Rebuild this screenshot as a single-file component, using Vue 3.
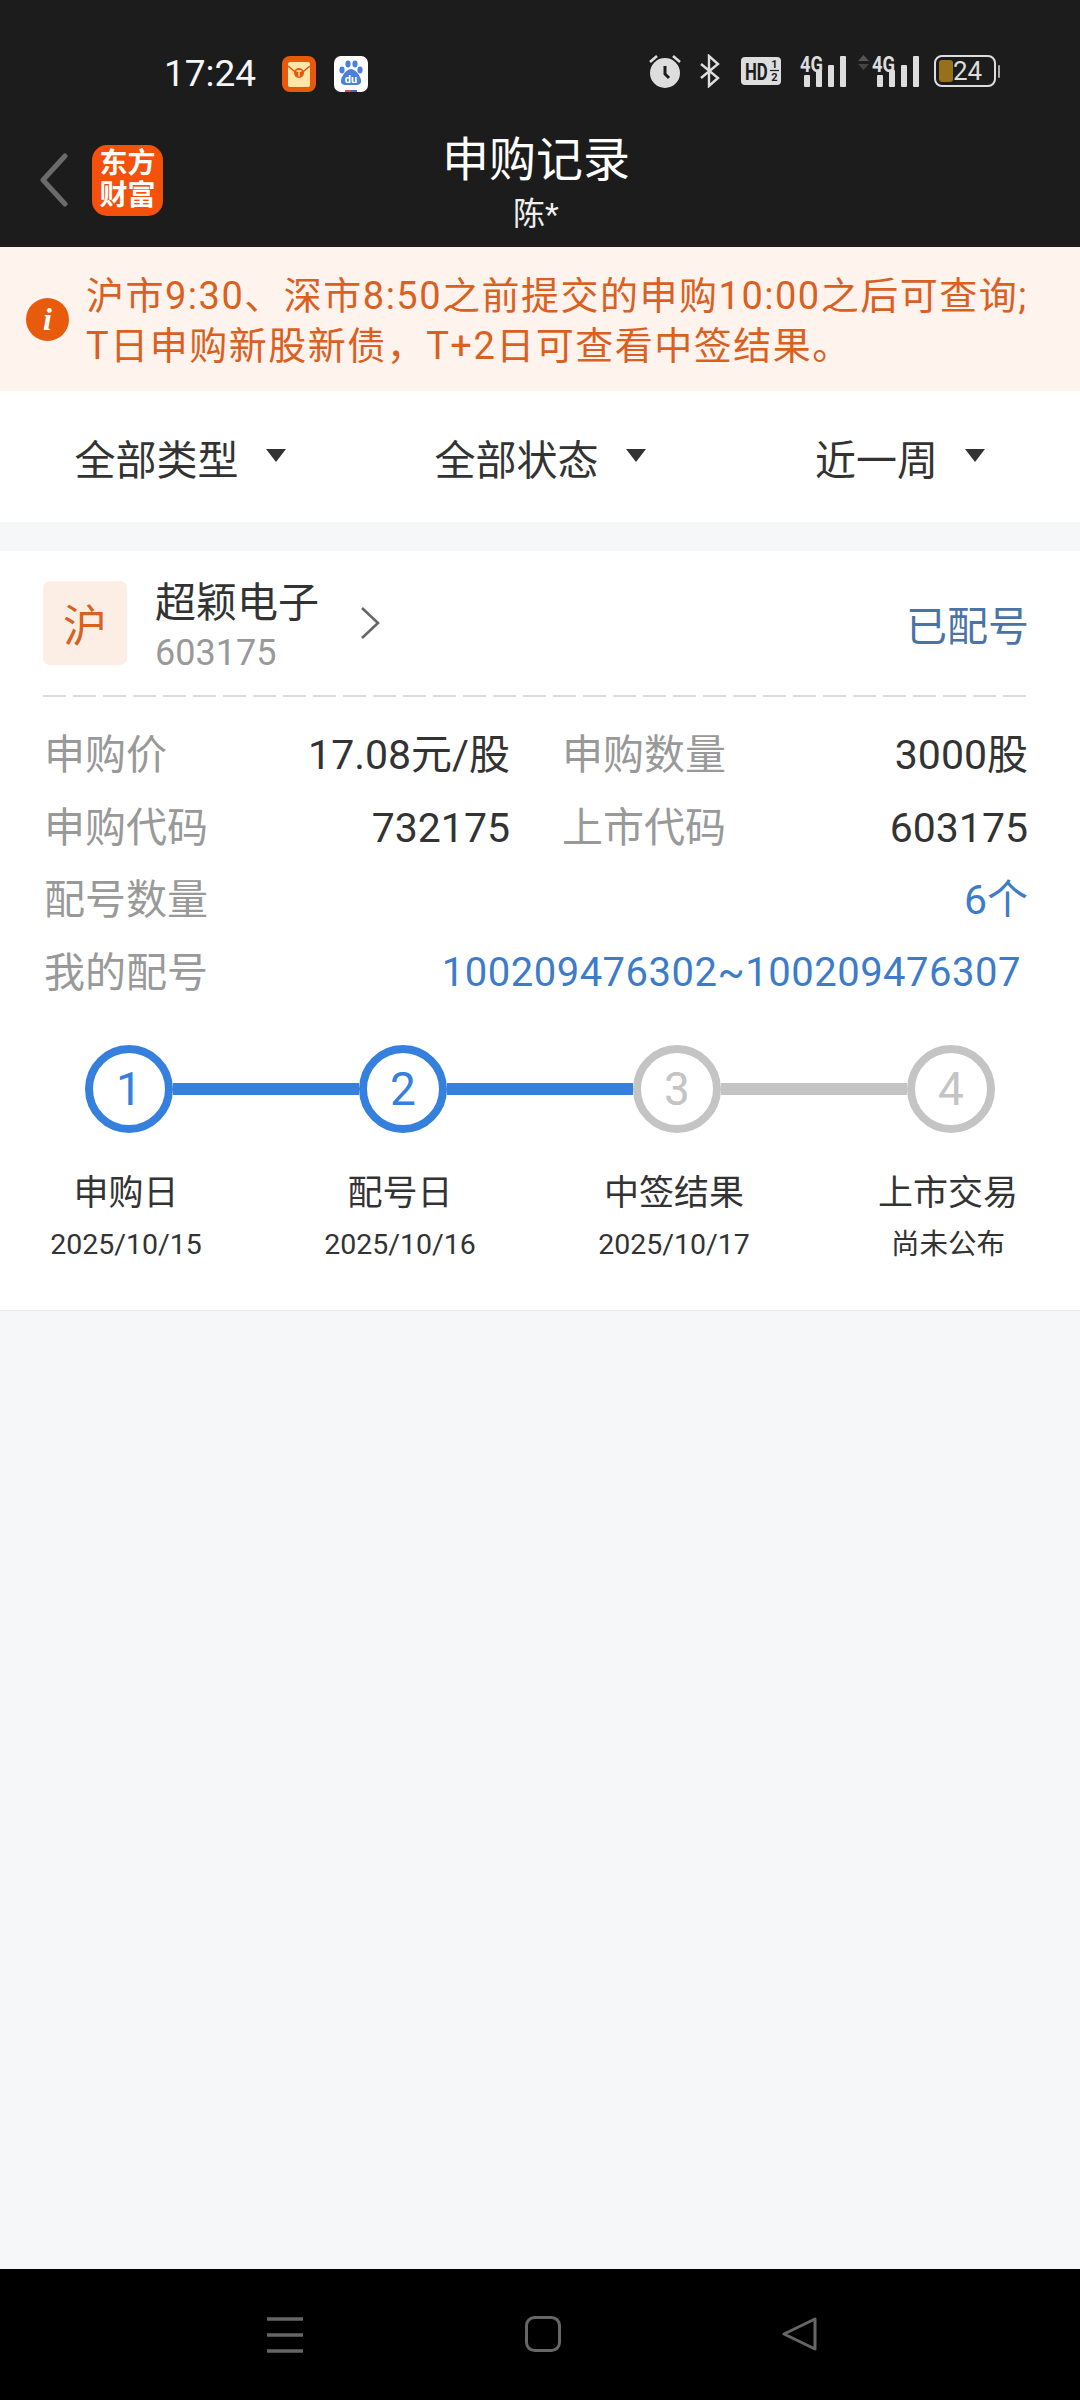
<script setup>
const rows = [
  [{ label: '申购价', value: '17.08元/股' }, { label: '申购数量', value: '3000股' }],
  [{ label: '申购代码', value: '732175' }, { label: '上市代码', value: '603175' }],
]
const steps = [
  { n: 1, name: '申购日', date: '2025/10/15', done: true },
  { n: 2, name: '配号日', date: '2025/10/16', done: true },
  { n: 3, name: '中签结果', date: '2025/10/17', done: false },
  { n: 4, name: '上市交易', date: '尚未公布', done: false },
]
const filters = ['全部类型', '全部状态', '近一周']
</script>

<template>
  <div class="page">
    <header class="header">
      <div class="status">
        <span class="time">17:24</span>
        <svg class="app-icon first" width="34" height="36" viewBox="0 0 34 36">
          <rect width="34" height="36" rx="8" fill="#e8590c" />
          <rect x="6" y="6" width="22" height="25" rx="2" fill="#fde6a8" />
          <path d="M6 10 L17 19 L28 10" fill="none" stroke="#d9530f" stroke-width="1.5" />
          <circle cx="17" cy="17" r="5" fill="#e8590c" />
          <path d="M14.5 15 H19.5 M17 15 V20.5" stroke="#fde6a8" stroke-width="1.4" />
        </svg>
        <svg class="app-icon" width="34" height="36" viewBox="0 0 34 36">
          <rect width="34" height="36" rx="7" fill="#fff" />
          <ellipse cx="8" cy="14" rx="2.6" ry="3.4" fill="#4a7fe0" />
          <ellipse cx="14" cy="8" rx="2.6" ry="3.4" fill="#4a7fe0" />
          <ellipse cx="21" cy="8" rx="2.6" ry="3.4" fill="#4a7fe0" />
          <ellipse cx="26" cy="14" rx="2.6" ry="3.4" fill="#4a7fe0" />
          <path d="M17 13 C22 13 28 22 27 26 C26 30 21 29 17 29 C13 29 8 30 7 26 C6 22 12 13 17 13 Z" fill="#4a7fe0" />
          <text x="17" y="27" text-anchor="middle" class="du">du</text>
          <rect x="11" y="34" width="6" height="2" fill="#d84a4a" />
          <rect x="17" y="34" width="6" height="2" fill="#4a62c0" />
        </svg>
        <div class="sys">
          <svg width="32" height="34" viewBox="0 0 32 34">
            <circle cx="16" cy="19" r="15" fill="#ddd" />
            <path d="M16 12 V20 L20 24" fill="none" stroke="#1c1c1c" stroke-width="3" />
            <path d="M1 8 L8 2 M31 8 L24 2" stroke="#ddd" stroke-width="2.6" />
          </svg>
          <svg class="ml-19" width="20" height="34" viewBox="0 0 20 34">
            <path d="M1 10 L18 24 L9 32 V2 L18 10 L1 24" fill="none" stroke="#ddd" stroke-width="2.4" />
          </svg>
          <svg class="ml-21" width="40" height="34" viewBox="0 -3 40 34">
            <rect width="40" height="28" rx="4" fill="#ddd" />
            <text transform="translate(4 23) scale(0.7 1)" class="hd">HD</text>
            <text x="33.5" y="11" text-anchor="middle" class="hd-small">1</text>
            <text x="33.5" y="24" text-anchor="middle" class="hd-small">2</text>
            <path d="M29 13.5 H38" stroke="#1c1c1c" stroke-width="1.2" />
          </svg>
          <svg class="ml-19" width="46" height="40" viewBox="0 -3 46 40">
            <text x="0" y="18" class="net" textLength="23" lengthAdjust="spacingAndGlyphs">4G</text>
            <rect x="4" y="21" width="6" height="12" rx="1" fill="#ddd" />
            <rect x="16" y="16" width="6" height="17" rx="1" fill="#ddd" />
            <rect x="28" y="11" width="6" height="22" rx="1" fill="#ddd" />
            <rect x="40" y="2" width="6" height="31" rx="1" fill="#ddd" />
          </svg>
          <svg class="ml-12" width="61" height="40" viewBox="0 -3 61 40">
            <path d="M0 7 L5.5 1 L11 7 Z" fill="#555" />
            <path d="M0 10 L5.5 16 L11 10 Z" fill="#444" />
            <text x="14" y="18" class="net" textLength="23" lengthAdjust="spacingAndGlyphs">4G</text>
            <rect x="19" y="21" width="6" height="12" rx="1" fill="#ddd" />
            <rect x="31" y="16" width="6" height="17" rx="1" fill="#ddd" />
            <rect x="43" y="11" width="6" height="22" rx="1" fill="#ddd" />
            <rect x="55" y="2" width="6" height="31" rx="1" fill="#ddd" />
          </svg>
          <svg class="ml-15" width="66" height="32" viewBox="0 0 66 32">
            <rect x="1" y="1" width="60" height="30" rx="7" fill="none" stroke="#ddd" stroke-width="2" />
            <rect x="5" y="5" width="14" height="22" rx="3" fill="#96701a" />
            <text x="19" y="25" class="batt">24</text>
            <rect x="64" y="10" width="2" height="13" rx="1" fill="#aaa" />
          </svg>
        </div>
      </div>
      <div class="nav">
        <div class="nav-left">
          <svg width="30" height="54" viewBox="0 0 30 54">
            <path d="M26 3 L4 27 L26 51" fill="none" stroke="#6b6b6b" stroke-width="5" stroke-linecap="round" stroke-linejoin="round" />
          </svg>
          <div class="logo"><span>东方</span><span>财富</span></div>
        </div>
        <div class="title">
          <div class="title-main">申购记录</div>
          <div class="title-sub">陈*</div>
        </div>
      </div>
    </header>

    <section class="notice">
      <span class="notice-icon">i</span>
      <p class="notice-text">
        沪市9:30、深市8:50之前提交的申购10:00之后可查询;<br />T日申购新股新债，T+2日可查看中签结果。
      </p>
    </section>

    <nav class="filters">
      <div v-for="f in filters" :key="f" class="filter">
        <span>{{ f }}</span>
        <i class="caret"></i>
      </div>
    </nav>

    <section class="card">
      <div class="stock">
        <span class="market">沪</span>
        <div class="stock-info">
          <div class="stock-name">超颖电子</div>
          <div class="stock-code">603175</div>
        </div>
        <svg class="arrow" width="20" height="34" viewBox="0 0 20 34">
          <path d="M2 2 L18 17 L2 32" fill="none" stroke="#666" stroke-width="2.6" />
        </svg>
        <span class="state">已配号</span>
      </div>
      <div class="dashes"></div>

      <div class="details">
        <div v-for="(row, i) in rows" :key="i" class="row two">
          <div v-for="cell in row" :key="cell.label" class="cell">
            <span class="label">{{ cell.label }}</span>
            <span class="value">{{ cell.value }}</span>
          </div>
        </div>
        <div class="row">
          <div class="cell">
            <span class="label">配号数量</span>
            <span class="value link">6个</span>
          </div>
        </div>
        <div class="row">
          <div class="cell">
            <span class="label">我的配号</span>
            <span class="value link range">100209476302~100209476307</span>
          </div>
        </div>
      </div>

      <div class="track">
        <template v-for="(s, i) in steps" :key="s.n">
          <span class="dot" :class="{ on: s.done }">{{ s.n }}</span>
          <span v-if="i < steps.length - 1" class="bar" :class="{ on: s.done }"></span>
        </template>
      </div>
      <div class="step-labels">
        <div v-for="s in steps" :key="s.n" class="step-label">
          <div class="step-name">{{ s.name }}</div>
          <div class="step-date">{{ s.date }}</div>
        </div>
      </div>
    </section>

    <footer class="sysnav">
      <svg width="36" height="38" viewBox="0 0 36 38">
        <path d="M0 3 H36 M0 19 H36 M0 35 H36" stroke="#666" stroke-width="3.4" />
      </svg>
      <svg width="36" height="36" viewBox="0 0 36 36">
        <rect x="1.5" y="1.5" width="33" height="33" rx="8" fill="none" stroke="#666" stroke-width="3" />
      </svg>
      <svg width="36" height="36" viewBox="0 0 36 36">
        <path d="M33 3 L33 33 L2 18 Z" fill="none" stroke="#666" stroke-width="3" stroke-linejoin="round" />
      </svg>
    </footer>
  </div>
</template>

<style>
html, body {
  margin: 0;
  padding: 0;
}
</style>

<style scoped>
.page {
  width: 1080px;
  height: 2400px;
  overflow: hidden;
  display: flex;
  flex-direction: column;
  background: #f6f7f9;
  font-family: Roboto, "Noto Sans CJK SC", sans-serif;
  color: #333;
}

.header {
  height: 247px;
  background: #1c1c1c;
  color: #fff;
  flex-shrink: 0;
}
.status {
  display: flex;
  align-items: center;
  height: 38px;
  padding: 55px 0 0 164px;
}
.time {
  font-size: 37px;
  line-height: 38px;
  width: 118px;
  color: #f5f5f5;
}
.app-icon.first {
  margin-right: 18px;
}
.sys {
  display: flex;
  align-items: center;
  margin: 0 0 6px 281px;
}
.ml-19 { margin-left: 19px; }
.ml-21 { margin-left: 21px; }
.ml-12 { margin-left: 12px; }
.ml-15 { margin-left: 15px; }
.du {
  font: 700 11px Roboto, sans-serif;
  fill: #fff;
}
.hd {
  font: 700 24px Roboto, sans-serif;
  fill: #1c1c1c;
}
.hd-small {
  font: 700 11px Roboto, sans-serif;
  fill: #1c1c1c;
}
.net {
  font: 700 22px Roboto, sans-serif;
  fill: #ddd;
}
.batt {
  font: 400 26px Roboto, sans-serif;
  fill: #ddd;
}

.nav {
  position: relative;
  display: flex;
  align-items: center;
  height: 154px;
}
.nav-left {
  display: flex;
  align-items: center;
  padding-left: 39px;
  gap: 23px;
  margin-top: 20px;
}
.logo {
  width: 71px;
  height: 71px;
  border-radius: 15px;
  background: #f5500c;
  display: flex;
  flex-direction: column;
  align-items: center;
  justify-content: center;
  font-size: 28px;
  font-weight: 700;
  line-height: 32px;
}
.title {
  position: absolute;
  left: 0;
  right: 8px;
  top: 33px;
  text-align: center;
}
.title-main {
  font-size: 47px;
  line-height: 68px;
}
.title-sub {
  font-size: 32px;
  line-height: 42px;
  margin-top: -1px;
  color: #eee;
}

.notice {
  height: 144px;
  flex-shrink: 0;
  box-sizing: border-box;
  background: #fff3ee;
  display: flex;
  align-items: center;
  padding-left: 26px;
  gap: 17px;
}
.notice-icon {
  width: 43px;
  height: 43px;
  border-radius: 50%;
  background: #e85a0c;
  color: #fff;
  display: flex;
  align-items: center;
  justify-content: center;
  font-family: "Liberation Serif", serif;
  font-weight: 700;
  font-style: italic;
  font-size: 32px;
}
.notice-text {
  margin: 3px 0 0;
  font-size: 38px;
  line-height: 50px;
  letter-spacing: 1.5px;
  color: #d9601f;
  white-space: nowrap;
}

.filters {
  height: 131px;
  flex-shrink: 0;
  background: #fff;
  display: grid;
  grid-template-columns: repeat(3, 1fr);
  margin-bottom: 29px;
}
.filter {
  display: flex;
  align-items: center;
  justify-content: center;
  gap: 27px;
  font-size: 41px;
}
.caret {
  width: 0;
  height: 0;
  border-left: 10px solid transparent;
  border-right: 10px solid transparent;
  border-top: 13px solid #333;
  margin-top: -2px;
}

.card {
  height: 760px;
  box-sizing: border-box;
  flex-shrink: 0;
  background: #fff;
  border-bottom: 1px solid #ebebeb;
}
.stock {
  display: flex;
  align-items: center;
  margin: 0 51px 0 43px;
  height: 144px;
  box-sizing: border-box;
}
.market {
  width: 84px;
  height: 84px;
  border-radius: 7px;
  background: #fdeee5;
  color: #d9601f;
  font-size: 44px;
  display: flex;
  align-items: center;
  justify-content: center;
}
.stock-info {
  margin: 8px 0 0 28px;
}
.stock-name {
  font-size: 41px;
  line-height: 52px;
}
.stock-code {
  font-size: 36px;
  line-height: 48px;
  color: #999;
}
.arrow {
  margin-left: 41px;
}
.state {
  margin-left: auto;
  font-size: 41px;
  color: #4a74a8;
}
.dashes {
  height: 2px;
  margin: 0 48px 0 43px;
  background: repeating-linear-gradient(90deg, #dcdcdc 0 23px, transparent 23px 30px);
}

.details {
  padding: 22px 52px 0 44px;
}
.row {
  height: 72.5px;
  display: flex;
  align-items: center;
}
.row.two {
  display: grid;
  grid-template-columns: 466px 1fr;
  gap: 52px;
}
.cell {
  display: flex;
  justify-content: space-between;
  align-items: center;
  flex: 1;
  font-size: 41px;
}
.label,
.value {
  line-height: 52px;
}
.label {
  color: #999;
}
.value {
  color: #333;
}
.link {
  color: #3d7cc9;
}
.range {
  margin-right: 7px;
  font-size: 40px;
  letter-spacing: 0.5px;
}

.track {
  display: flex;
  align-items: center;
  padding-left: 85px;
  margin-top: 36px;
}
.dot {
  width: 88px;
  height: 88px;
  box-sizing: border-box;
  border-radius: 50%;
  border: 8px solid #c4c4c4;
  color: #c4c4c4;
  font-size: 46px;
  display: flex;
  align-items: center;
  justify-content: center;
  flex-shrink: 0;
}
.dot.on {
  border-color: #3580dd;
  color: #3580dd;
}
.bar {
  width: 186px;
  height: 12px;
  background: #c4c4c4;
}
.bar.on {
  background: #3580dd;
}
.step-labels {
  display: grid;
  grid-template-columns: repeat(4, 274px);
  margin: 39px 0 0 -11px;
}
.step-label {
  text-align: center;
}
.step-name {
  font-size: 35px;
  line-height: 44px;
}
.step-date {
  font-size: 28.5px;
  line-height: 40px;
  margin-top: 9px;
}

.sysnav {
  margin-top: auto;
  height: 131px;
  flex-shrink: 0;
  background: #000;
  display: flex;
  align-items: flex-start;
  padding: 47px 262px 0 267px;
  box-sizing: border-box;
  justify-content: space-between;
}
</style>
